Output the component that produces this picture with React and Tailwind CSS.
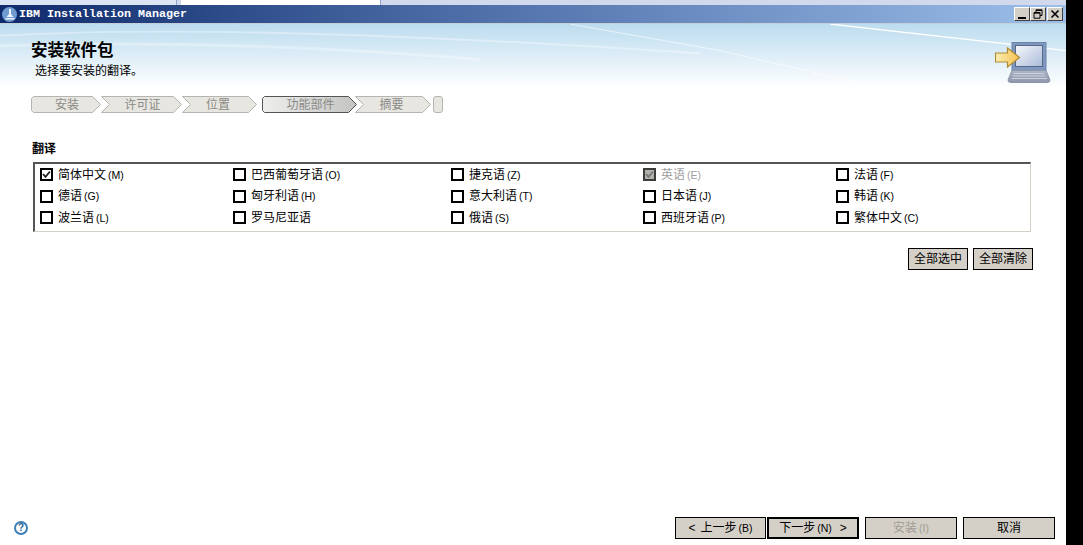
import React from "react";

const cjk = "font-['Liberation_Sans','Noto_Sans_CJK_SC',sans-serif]";

const steps = [
  { label: "安装", w: "w-[70px]", points: "0.5,2.5 2.5,0.5 61.5,0.5 69.5,8.5 61.5,16.5 2.5,16.5 0.5,14.5", fill: "#e8e6e1", pad: "pl-[2px]" },
  { label: "许可证", w: "w-[81px]", points: "0.5,0.5 72.5,0.5 80.5,8.5 72.5,16.5 0.5,16.5 8.5,8.5", fill: "#e8e6e1", pad: "pl-[2px]" },
  { label: "位置", w: "w-[75px]", points: "0.5,0.5 66.5,0.5 74.5,8.5 66.5,16.5 0.5,16.5 8.5,8.5", fill: "#e8e6e1", pad: "pr-[3px]" },
];

const languages = [
  ["简体中文", "M"], ["巴西葡萄牙语", "O"], ["捷克语", "Z"], ["英语", "E"], ["法语", "F"],
  ["德语", "G"], ["匈牙利语", "H"], ["意大利语", "T"], ["日本语", "J"], ["韩语", "K"],
  ["波兰语", "L"], ["罗马尼亚语", ""], ["俄语", "S"], ["西班牙语", "P"], ["繁体中文", "C"],
];

function Mnemonic({ letter }) {
  return <span className="ml-[2px] text-[10.5px] leading-none">({letter})</span>;
}

function Step({ label, w, points, fill, stroke = "#b4b4b0", grad, pad = "", className = "" }) {
  return (
    <div className={`relative flex h-[17px] items-center justify-center ${w} ${pad} ${className}`}>
      <svg className="absolute inset-0 h-full w-full" viewBox={`0 0 ${parseInt(w.slice(3))} 17`}>
        <defs>
          <linearGradient id="activeStep" x1="0" x2="1" y1="0" y2="0">
            <stop offset="0" stopColor="#eeeeec" />
            <stop offset="1" stopColor="#c4c4c2" />
          </linearGradient>
        </defs>
        <polygon points={points} fill={grad ? "url(#activeStep)" : fill} stroke={stroke} />
      </svg>
      <span className="relative text-[12px] leading-none text-[#8a8a86]">{label}</span>
    </div>
  );
}

function Checkbox({ checked, disabled }) {
  return (
    <span
      className={`flex h-[13px] w-[13px] shrink-0 items-center justify-center border-2 ${
        disabled ? "border-[#3c3c3c] bg-[#b4b2ac]" : "border-black bg-white"
      }`}
    >
      {checked && (
        <svg viewBox="0 0 9 9" className="h-[9px] w-[9px]">
          <path d="M1 4 L3.5 6.8 L8 1.5" fill="none" stroke={disabled ? "#777" : "#222"} strokeWidth="1.8" />
        </svg>
      )}
    </span>
  );
}

function Button({ children, className = "", disabled }) {
  return (
    <button
      type="button"
      className={`flex h-[22px] items-center justify-center border border-black bg-[#d4d0c8] text-[12px] leading-none ${
        disabled ? "text-[#a09c94]" : "text-black"
      } ${className}`}
    >
      {children}
    </button>
  );
}

function ComputerIcon() {
  return (
    <svg viewBox="0 0 56 42" className="h-[42px] w-[56px]">
      <defs>
        <linearGradient id="screen" x1="0" y1="0" x2="1" y2="1">
          <stop offset="0" stopColor="#f6f8fc" />
          <stop offset="1" stopColor="#a9bad8" />
        </linearGradient>
        <linearGradient id="arrow" x1="0" y1="0" x2="1" y2="0">
          <stop offset="0" stopColor="#fbeeb4" />
          <stop offset="1" stopColor="#f5c04f" />
        </linearGradient>
        <linearGradient id="deck" x1="0" y1="0" x2="0" y2="1">
          <stop offset="0" stopColor="#aeb6c6" />
          <stop offset="1" stopColor="#8d97aa" />
        </linearGradient>
      </defs>
      <rect x="17" y="0.5" width="34" height="28" fill="#7f97bd" stroke="#6a84ad" />
      <rect x="20.5" y="3.5" width="27" height="21" fill="url(#screen)" stroke="#56698c" />
      <path d="M17 28.5 H51 L55 38 Q55 40.5 52 40.5 H16 Q13 40.5 13 38 Z" fill="url(#deck)" stroke="#8d97aa" />
      <path d="M19 31.5 H49 M18 34 H50 M17 36.5 H52" stroke="#ccd3df" strokeWidth="1" />
      <path d="M0.5 11 H12.5 V6 L24.5 15.5 L12.5 25 V20 H0.5 Z" fill="url(#arrow)" stroke="#b08a32" strokeWidth="1.2" />
    </svg>
  );
}

function WindowButton({ children }) {
  return (
    <span className="flex h-[14px] w-[16px] items-center justify-center border border-t-white border-r-[#404040] border-b-[#404040] border-l-white bg-[#d4d0c8]">
      {children}
    </span>
  );
}

export default function App() {
  return (
    <div className={`flex h-[545px] w-[1083px] overflow-hidden bg-white ${cjk}`}>
      <div className="flex w-[1066px] flex-col">
        {/* whatever sits behind the window */}
        <div className="flex h-[5px] shrink-0">
          <div className="w-[176px] bg-[#dbe5f3]" />
          <div className="w-[5px] border-l border-[#8ea4c8] bg-[#d3d9ec]" />
          <div className="w-[199px] bg-white" />
          <div className="flex-1 border-l border-[#8ea4c8] bg-[#d3d9ec]" />
        </div>

        {/* title bar */}
        <div className="flex h-[18px] shrink-0 items-center bg-gradient-to-r from-[#0f2a6b] via-[#3f5f9b] via-33% to-[#9dbfea] pr-[3px] pl-[2px]">
          <span className="flex h-[15px] w-[15px] items-center justify-center rounded-full bg-[#6f9bd0]">
            <svg viewBox="0 0 12 12" className="h-[12px] w-[12px]">
              <path d="M5 1 H7 V6 L9.5 9 H2.5 L5 6 Z M1.5 10 H10.5 V11.5 H1.5 Z" fill="#eef3fb" />
            </svg>
          </span>
          <span className="mt-[2px] ml-[2px] font-['Liberation_Mono',monospace] text-[11.67px] leading-none font-bold text-white">
            IBM Installation Manager
          </span>
          <div className="ml-auto flex">
            <WindowButton>
              <span className="mt-[7px] h-[2px] w-[8px] bg-black" />
            </WindowButton>
            <WindowButton>
              <svg viewBox="0 0 10 10" className="h-[10px] w-[10px]">
                <path d="M3 3 V0.8 H9 V6.5 H7 M1 3.5 H7 V9.2 H1 Z M3 1.5 H9 M1 4.2 H7" fill="none" stroke="#000" />
              </svg>
            </WindowButton>
            <span className="w-[1px]" />
            <WindowButton>
              <svg viewBox="0 0 10 10" className="h-[10px] w-[10px]">
                <path d="M1.5 1.5 L8.5 8.5 M8.5 1.5 L1.5 8.5" stroke="#000" strokeWidth="1.6" />
              </svg>
            </WindowButton>
          </div>
        </div>

        {/* header banner */}
        <div className="relative h-[65px] shrink-0 border-t border-[#c4d0d8] bg-gradient-to-b from-[#bcdcef] to-white pt-[16px] pl-[31px]">
          <svg className="absolute inset-0 h-full w-full" viewBox="0 0 1066 65" preserveAspectRatio="none">
            <path d="M0 12 Q240 -2 700 30" fill="none" stroke="#ffffff" strokeOpacity="0.35" strokeWidth="2" />
            <path d="M570 0 L720 27 L860 60" fill="none" stroke="#ffffff" strokeOpacity="0.6" strokeWidth="1" />
            <path d="M830 0 L1066 27" fill="none" stroke="#ffffff" strokeWidth="1.3" />
            <path d="M0 22 Q230 15 480 36" fill="none" stroke="#ffffff" strokeOpacity="0.3" strokeWidth="3" />
          </svg>
          <div className="relative text-[16.5px] leading-[20px] font-bold text-black">安装软件包</div>
          <div className="relative mt-[4px] ml-[4px] text-[12px] leading-[14px] text-black">选择要安装的翻译。</div>
          <div className="absolute top-[18px] right-[15px]">
            <ComputerIcon />
          </div>
        </div>

        {/* breadcrumb */}
        <div className="mt-[8px] flex h-[17px] shrink-0 pl-[31px]">
          {steps.map((s) => (
            <Step key={s.label} {...s} />
          ))}
          <Step
            label="功能部件"
            w="w-[95px]"
            points="0.5,2.5 2.5,0.5 86.5,0.5 94.5,8.5 86.5,16.5 2.5,16.5 0.5,14.5"
            grad
            stroke="#555"
            pad="pl-[2px]"
            className="ml-[5px]"
          />
          <Step
            label="摘要"
            w="w-[76px]"
            points="0.5,0.5 67.5,0.5 75.5,8.5 67.5,16.5 0.5,16.5 8.5,8.5"
            fill="#e8e6e1"
            pad="pr-[3px]"
            className="-ml-[2px]"
          />
          <div className="ml-[2px] h-[17px] w-[10px] rounded-[3px] border border-[#b4b4b0] bg-[#e8e6e1]" />
        </div>

        {/* translations */}
        <div className="mt-[28px] h-[16px] shrink-0 pl-[32px] text-[12px] leading-[16px] font-bold text-black">翻译</div>
        <div className="mt-[5px] ml-[33px] grid h-[70px] w-[998px] shrink-0 grid-cols-[193px_218px_192px_193px_1fr] content-start border-t-2 border-r border-b border-l-2 border-t-[#555] border-r-[#d4d0c8] border-b-[#d4d0c8] border-l-[#555] pl-[5px]">
          {languages.map(([name, key]) => {
            const isEnglish = name === "英语";
            return (
              <label key={name} className="flex h-[21.5px] items-center gap-[5px]">
                <Checkbox checked={isEnglish || name === "简体中文"} disabled={isEnglish} />
                <span className={`flex items-center text-[12px] leading-none whitespace-nowrap ${isEnglish ? "text-[#a0a0a0]" : "text-black"}`}>
                  {name}
                  {key && <Mnemonic letter={key} />}
                </span>
              </label>
            );
          })}
        </div>

        <div className="mt-[16px] flex shrink-0 justify-end gap-[5px] pr-[33px]">
          <Button className="w-[60px]">全部选中</Button>
          <Button className="w-[60px]">全部清除</Button>
        </div>

        {/* footer */}
        <div className="mt-auto mb-[6px] flex shrink-0 items-center pr-[11px] pl-[14px]">
          <span className="flex h-[14px] w-[14px] items-center justify-center rounded-full border-2 border-[#3f7fb8] text-[10px] leading-none font-bold text-[#2a5f96]">
            ?
          </span>
          <div className="ml-auto flex">
            <Button className="w-[91px] gap-[5px]">
              <span>&lt;</span>
              <span>
                上一步
                <Mnemonic letter="B" />
              </span>
            </Button>
            <Button className="ml-[1px] w-[92px] gap-[8px] border-2">
              <span>
                下一步
                <Mnemonic letter="N" />
              </span>
              <span>&gt;</span>
            </Button>
            <Button className="ml-[6px] w-[92px]" disabled>
              安装
              <Mnemonic letter="I" />
            </Button>
            <Button className="ml-[6px] w-[92px]">取消</Button>
          </div>
        </div>
      </div>
      <div className="w-[17px] bg-black" />
    </div>
  );
}
